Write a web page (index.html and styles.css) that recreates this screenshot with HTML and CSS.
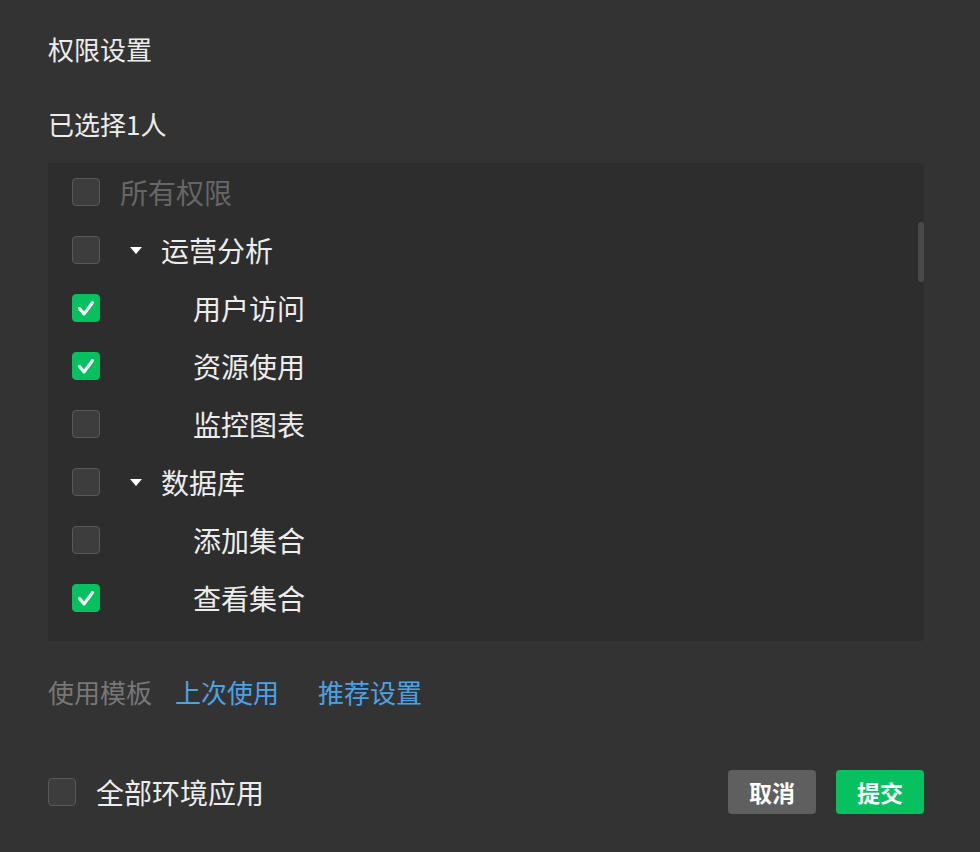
FILE: index.html
```html
<!DOCTYPE html>
<html lang="zh-CN">
<head>
<meta charset="utf-8">
<title>权限设置</title>
<link rel="stylesheet" href="styles.css">
</head>
<body>
<div class="dialog">
  <div class="title">权限设置</div>
  <div class="subtitle">已选择1人</div>
  <div class="panel">
    <div class="list">
      <div class="row">
        <span class="cb"></span>
        <span class="label all">所有权限</span>
      </div>
      <div class="row">
        <span class="cb"></span>
        <span class="caret"></span>
        <span class="label parent">运营分析</span>
      </div>
      <div class="row">
        <span class="cb on"><svg viewBox="0 0 28 28"><polyline points="7.5,14.5 12,20 20.5,8.5"/></svg></span>
        <span class="label child">用户访问</span>
      </div>
      <div class="row">
        <span class="cb on"><svg viewBox="0 0 28 28"><polyline points="7.5,14.5 12,20 20.5,8.5"/></svg></span>
        <span class="label child">资源使用</span>
      </div>
      <div class="row">
        <span class="cb"></span>
        <span class="label child">监控图表</span>
      </div>
      <div class="row">
        <span class="cb"></span>
        <span class="caret"></span>
        <span class="label parent">数据库</span>
      </div>
      <div class="row">
        <span class="cb"></span>
        <span class="label child">添加集合</span>
      </div>
      <div class="row">
        <span class="cb on"><svg viewBox="0 0 28 28"><polyline points="7.5,14.5 12,20 20.5,8.5"/></svg></span>
        <span class="label child">查看集合</span>
      </div>
    </div>
    <div class="scrollbar"></div>
  </div>
  <div class="templates">
    <span class="tpl-label">使用模板</span>
    <a class="link first">上次使用</a>
    <a class="link">推荐设置</a>
  </div>
  <div class="footer">
    <div class="apply">
      <span class="cb"></span>
      <span class="apply-label">全部环境应用</span>
    </div>
    <div class="buttons">
      <button class="btn cancel">取消</button>
      <button class="btn submit">提交</button>
    </div>
  </div>
</div>
</body>
</html>
```
FILE: styles.css
```css
html, body {
  margin: 0;
  padding: 0;
  background: #333333;
}
body {
  font-family: "Noto Sans CJK SC", "Noto Sans", sans-serif;
  color: #ededed;
}
.dialog {
  padding: 32px 56px 0 48px;
}
.title {
  font-size: 26px;
  line-height: 34px;
  height: 34px;
}
.subtitle {
  margin-top: 41px;
  font-size: 26px;
  line-height: 34px;
  height: 34px;
}
.panel {
  position: relative;
  margin-top: 22px;
  height: 478px;
  background: #2d2d2d;
  border-radius: 4px;
  overflow: hidden;
}
.row {
  display: flex;
  align-items: center;
  height: 58px;
  padding-left: 24px;
}
.cb {
  flex: none;
  box-sizing: border-box;
  width: 28px;
  height: 28px;
  border: 1px solid #595959;
  border-radius: 4px;
  background: #3d3d3d;
  display: flex;
  align-items: center;
  justify-content: center;
}
.cb.on {
  background: #07c160;
  border-color: #07c160;
}
.cb svg {
  width: 28px;
  height: 28px;
  flex: none;
}
.cb polyline {
  fill: none;
  stroke: #ffffff;
  stroke-width: 3;
  stroke-linecap: round;
  stroke-linejoin: round;
}
.label {
  font-size: 28px;
  line-height: 36px;
  white-space: nowrap;
}
.label.all {
  margin-left: 20px;
  color: #666666;
}
.caret {
  flex: none;
  margin-left: 30px;
  width: 0;
  height: 0;
  border-left: 6px solid transparent;
  border-right: 6px solid transparent;
  border-top: 7px solid #ffffff;
}
.label.parent {
  margin-left: 19px;
}
.label.child {
  margin-left: 93px;
}
.scrollbar {
  position: absolute;
  right: 0;
  top: 59px;
  width: 6px;
  height: 60px;
  border-radius: 3px;
  background: #4a4a4a;
}
.templates {
  margin-top: 34px;
  height: 34px;
  display: flex;
  align-items: center;
  font-size: 26px;
  line-height: 34px;
}
.tpl-label {
  color: #777777;
}
.link {
  color: #4ba2e6;
  cursor: pointer;
}
.link.first {
  margin-left: 23px;
  margin-right: 39px;
}
.footer {
  margin-top: 61px;
  display: flex;
  align-items: center;
  justify-content: space-between;
  height: 44px;
}
.apply {
  display: flex;
  align-items: center;
}
.apply-label {
  margin-left: 20px;
  font-size: 28px;
  line-height: 36px;
}
.buttons {
  display: flex;
  gap: 20px;
}
.btn {
  width: 88px;
  height: 44px;
  border: none;
  border-radius: 4px;
  font-family: "Noto Sans CJK SC", "Noto Sans", sans-serif;
  font-size: 23px;
  font-weight: 700;
  color: #ffffff;
  padding: 0;
  cursor: pointer;
}
.btn.cancel {
  background: #5f5f5f;
}
.btn.submit {
  background: #07c160;
}
```
